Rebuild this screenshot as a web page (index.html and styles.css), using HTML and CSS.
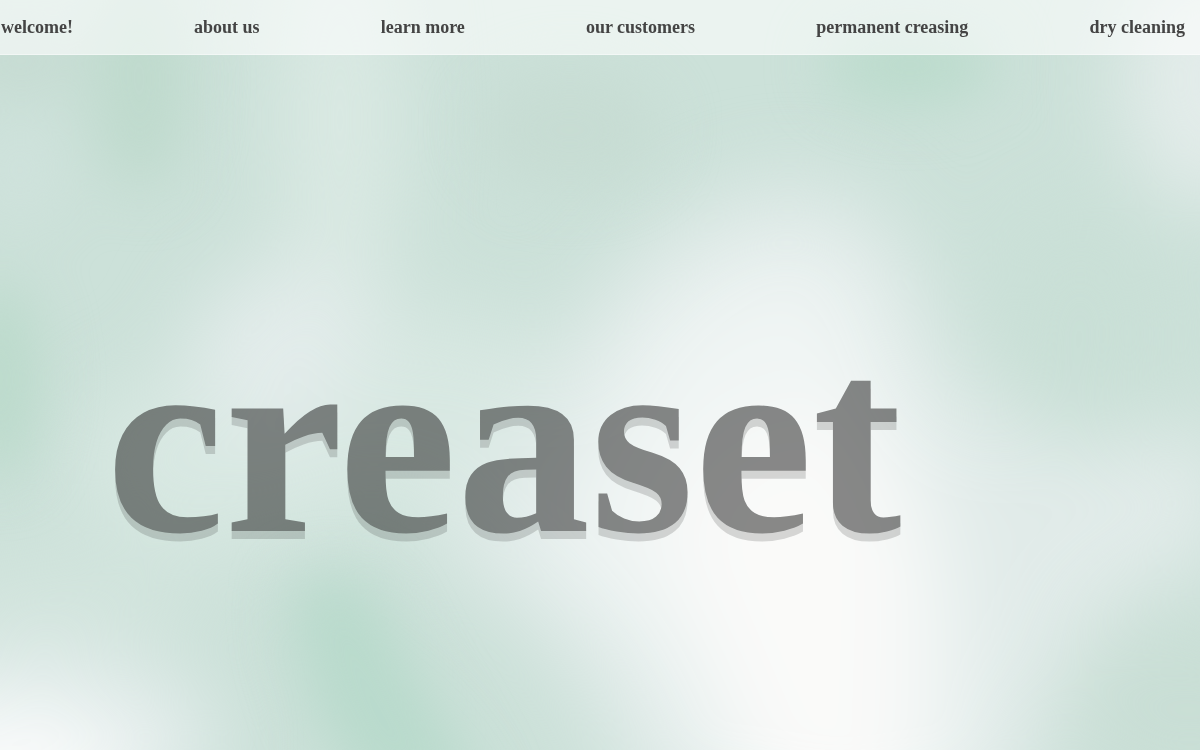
FILE: index.html
```html
<!DOCTYPE html>
<html lang="en">
<head>
    <meta charset="UTF-8">
    <meta name="viewport" content="width=device-width, initial-scale=1.0">
    <title>creaset</title>
    <link rel="stylesheet" href="styles.css">
</head>
<body>
    <svg class="backdrop" viewBox="0 0 1200 750" preserveAspectRatio="none" aria-hidden="true">
        <defs>
            <filter id="soft" x="-100%" y="-100%" width="300%" height="300%" color-interpolation-filters="sRGB">
                <feGaussianBlur stdDeviation="28"/>
            </filter>
            <filter id="wide" x="-100%" y="-100%" width="300%" height="300%" color-interpolation-filters="sRGB">
                <feGaussianBlur stdDeviation="42"/>
            </filter>
        </defs>
        <rect width="1200" height="750" fill="#cce1d9"/>
        <g filter="url(#wide)">
            <ellipse cx="340" cy="120" rx="60" ry="230" fill="#dae9e3"/>
            <ellipse cx="230" cy="460" rx="160" ry="90" fill="#d8e8e2"/>
            <ellipse cx="290" cy="355" rx="100" ry="90" fill="#e3eceb"/>
            <ellipse cx="450" cy="420" rx="120" ry="110" fill="#d8e8e2"/>
            <ellipse cx="60" cy="600" rx="150" ry="50" fill="#d2e4dd"/>
            <path d="M600 290 Q700 180 800 180 Q910 190 940 340 Q980 460 1240 430 L1220 570 Q1050 580 1030 820 L640 820 Q590 640 430 550 Q520 420 600 290Z" fill="#e1ebe9"/>
            <path d="M640 350 Q730 240 840 270 Q900 400 950 540 Q980 680 950 830 L730 830 Q680 650 540 540 Q600 440 640 350Z" fill="#f0f5f4"/>
            <path d="M720 440 L840 400 L910 540 L900 840 L790 840 L660 530Z" fill="#fafaf9"/>
            <ellipse cx="30" cy="740" rx="190" ry="90" fill="#e4edec"/>
            <ellipse cx="0" cy="780" rx="130" ry="70" fill="#fafbfb"/>
            <ellipse cx="1210" cy="80" rx="90" ry="130" fill="#e3ecea"/>
            <ellipse cx="1190" cy="710" rx="130" ry="90" fill="#c9ded5"/>
            <ellipse cx="1080" cy="330" rx="80" ry="120" fill="#c9dfd6"/>
        </g>
        <g filter="url(#soft)">
            <ellipse cx="140" cy="80" rx="50" ry="110" fill="#bfdacd"/>
            <ellipse cx="20" cy="60" rx="60" ry="30" fill="#c5dad1"/>
            <ellipse cx="20" cy="170" rx="40" ry="50" fill="#cfe2dc"/>
            <ellipse cx="910" cy="65" rx="85" ry="40" fill="#bbdbcc"/>
            <ellipse cx="570" cy="130" rx="90" ry="60" fill="#c7dcd3"/>
            <ellipse cx="0" cy="380" rx="40" ry="100" fill="#bbdacb"/>
            <path d="M290 590 Q360 540 400 640 L490 800 L370 800 Q290 700 290 590Z" fill="#b9dacc"/>
        </g>
    </svg>

    <header>
        <nav>
            <a href="#welcome">welcome!</a>
            <a href="#about">about us</a>
            <a href="#learn">learn more</a>
            <a href="#customers">our customers</a>
            <a href="#creasing">permanent creasing</a>
            <a href="#cleaning">dry cleaning</a>
        </nav>
    </header>

    <main id="welcome">
        <h1>creaset</h1>
    </main>
</body>
</html>
```
FILE: styles.css
```css
body {
    margin: 0;
    min-height: 100vh;
    font-family: "Liberation Serif", "Times New Roman", serif;
    color: #222;
    background-color: #cde1d9;
    overflow: hidden;
}

.backdrop {
    position: fixed;
    top: 0;
    left: 0;
    width: 100%;
    height: 100%;
    z-index: -1;
}

header {
    background-color: rgba(255, 255, 255, 0.6);
    border-bottom: 1px solid rgba(255, 255, 255, 0.4);
}

nav {
    display: flex;
    justify-content: space-between;
    padding: 17px 15px 17px 1px;
}

nav a {
    color: #444;
    font-size: 18px;
    font-weight: bold;
    line-height: 20px;
    text-decoration: none;
    white-space: nowrap;
}

nav a:hover {
    color: #000;
}

main {
    padding: 236px 106px 0;
}

h1 {
    margin: 0;
    font-size: 267px;
    line-height: 300px;
    opacity: 0.53;
    text-shadow: 0 8px 0 rgba(34, 34, 34, 0.32);
}
```
